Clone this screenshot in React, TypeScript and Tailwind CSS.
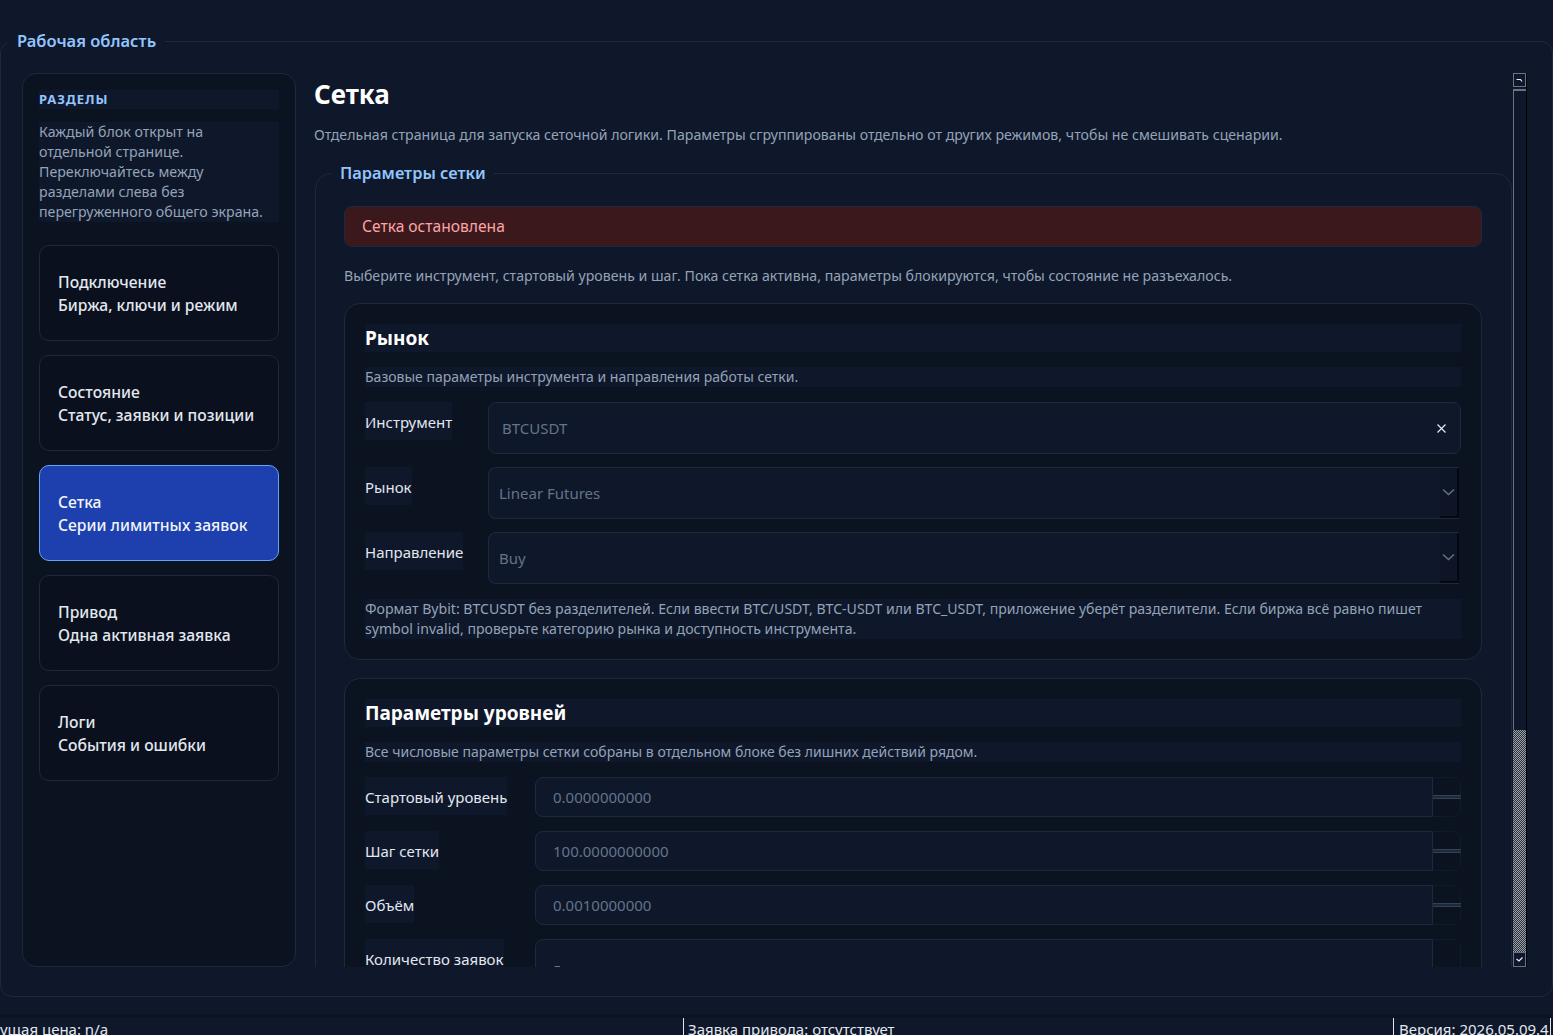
import React from "react";

type NavItem = { title: string; sub: string; active?: boolean };

const navItems: NavItem[] = [
  { title: "Подключение", sub: "Биржа, ключи и режим" },
  { title: "Состояние", sub: "Статус, заявки и позиции" },
  { title: "Сетка", sub: "Серии лимитных заявок", active: true },
  { title: "Привод", sub: "Одна активная заявка" },
  { title: "Логи", sub: "События и ошибки" },
];

const levels = [
  { label: "Стартовый уровень", value: "0.0000000000", tall: false },
  { label: "Шаг сетки", value: "100.0000000000", tall: false },
  { label: "Объём", value: "0.0010000000", tall: false },
  { label: "Количество заявок", value: "5", tall: true },
];

function Sidebar() {
  return (
    <div className="flex h-full w-[274px] shrink-0 flex-col rounded-[14px] border border-[#1e293b] bg-[#0b1220] px-[16px] pt-[16px]">
      <div className="flex h-[19px] items-center bg-[#0f172a] text-[13px] font-bold tracking-[0.9px] text-[#93c5fd]">
        РАЗДЕЛЫ
      </div>
      <div className="mt-[13px] bg-[#0f172a] text-[14.2px] leading-[20px] text-[#94a3b8]">
        <div className="whitespace-nowrap">Каждый блок открыт на</div>
        <div className="whitespace-nowrap">отдельной странице.</div>
        <div className="whitespace-nowrap">Переключайтесь между</div>
        <div className="whitespace-nowrap">разделами слева без</div>
        <div className="whitespace-nowrap">перегруженного общего экрана.</div>
      </div>
      <div className="mt-[23px] flex flex-col gap-[14px]">
        {navItems.map((item) => (
          <div
            key={item.title}
            className={`flex h-[96px] flex-col justify-center rounded-[10px] border px-[18px] pt-[2px] text-[15.7px] font-medium leading-[23px] ${
              item.active
                ? "border-[#60a5fa] bg-[#1e40af] text-[#f1f5f9]"
                : "border-[#1e293b] bg-[#0a101d] text-[#e2e8f0]"
            }`}
          >
            <div>{item.title}</div>
            <div>{item.sub}</div>
          </div>
        ))}
      </div>
    </div>
  );
}

function Label({ text, width }: { text: string; width: string }) {
  return (
    <div className={`${width} shrink-0`}>
      <span className="inline-flex h-[38px] items-center bg-[#0f172a] pt-[2px] text-[15px] text-[#e2e8f0]">
        {text}
      </span>
    </div>
  );
}

function Chevron() {
  return (
    <svg width="13" height="8" viewBox="0 0 13 8">
      <path d="M1 1.5 L6.5 6.5 L12 1.5" stroke="#64748b" strokeWidth="1.4" fill="none" />
    </svg>
  );
}

function ComboField({ value }: { value: string }) {
  return (
    <div className="mr-[2px] flex h-[52px] flex-1 overflow-hidden rounded-l-[8px] border border-r-0 border-[#1e293b] bg-[#0f172a]">
      <div className="flex flex-1 items-center pl-[10px] text-[15px] text-[#64748b]">{value}</div>
      <div className="flex w-[19px] items-center justify-center border-r-2 border-b-2 border-[#05080f] bg-[#0d1526]">
        <Chevron />
      </div>
    </div>
  );
}

function SpinField({ value, tall }: { value: string; tall: boolean }) {
  return (
    <div className={`flex flex-1 ${tall ? "h-[62px]" : "h-[40px]"}`}>
      <div className="flex flex-1 items-center rounded-l-[8px] border border-[#1e293b] bg-[#0f172a] pl-[17px] text-[15px] text-[#64748b]">
        {value}
      </div>
      <div className="flex w-[28px] flex-col">
        <div className="flex-1 rounded-tr-[8px] border-t border-r border-[#111a2c] bg-[#0b1220]" />
        <div className="h-[4px] border-y border-[#334155] bg-[#1e293b]" />
        <div className="flex-1 rounded-br-[8px] border-b border-r border-[#111a2c] bg-[#0b1220]" />
      </div>
    </div>
  );
}

function Scrollbar() {
  return (
    <div className="flex h-full w-[14px] shrink-0 flex-col border-r border-black bg-[#0f172a]">
      <div className="flex h-[14px] items-center justify-center border border-[#6b7280] bg-[#0f172a]">
        <svg width="7" height="5" viewBox="0 0 7 5">
          <path d="M0.5 1.5 H4.5 L6 3.5" stroke="#e0f2fe" strokeWidth="1.2" fill="none" />
        </svg>
      </div>
      <div className="mt-[2px] h-[641px] border-t-2 border-l border-[#6b7280] bg-[#0f172a]" />
      <div className="flex-1 bg-[repeating-conic-gradient(#9ca3af_0_25%,#2b2f36_0_50%)] bg-[length:2px_2px]" />
      <div className="flex h-[15px] items-center justify-center border border-[#6b7280] bg-[#0f172a]">
        <svg width="7" height="5" viewBox="0 0 7 5">
          <path d="M0.5 2 L3 4 L6.5 0.5" stroke="#e0f2fe" strokeWidth="1.2" fill="none" />
        </svg>
      </div>
    </div>
  );
}

function GridPage() {
  return (
    <div className="h-full flex-1 overflow-hidden">
      <h1 className="mt-[5px] text-[26px] font-bold leading-[32px] text-white">Сетка</h1>
      <p className="mt-[15px] whitespace-nowrap text-[14.15px] leading-[20px] text-[#94a3b8]">
        Отдельная страница для запуска сеточной логики. Параметры сгруппированы отдельно от других режимов, чтобы не смешивать сценарии.
      </p>
      <fieldset className="mt-[16px] ml-[1px] mr-[1px] rounded-[16px] border border-[#1e293b] pl-[28px] pr-[29px] pt-[21px] pb-[30px]">
        <legend className="ml-[-12px] px-[8px] text-[16.4px] font-semibold leading-[24px] text-[#93c5fd]">
          Параметры сетки
        </legend>
        <div className="flex h-[41px] items-center rounded-[8px] border border-[#1e293b] bg-[#3b181c] px-[17px] text-[15.6px] text-[#fca5a5]">
          Сетка остановлена
        </div>
        <p className="mt-[19px] whitespace-nowrap text-[14.15px] leading-[20px] text-[#94a3b8]">
          Выберите инструмент, стартовый уровень и шаг. Пока сетка активна, параметры блокируются, чтобы состояние не разъехалось.
        </p>

        <div className="mt-[17px] flex flex-col gap-[15px] rounded-[16px] border border-[#1e293b] bg-[#0b1220] p-[20px]">
          <div className="flex h-[28px] items-center bg-[#0f172a] text-[19px] font-bold text-white">Рынок</div>
          <div className="h-[20px] bg-[#0f172a] text-[14px] leading-[20px] text-[#94a3b8]">
            Базовые параметры инструмента и направления работы сетки.
          </div>
          <div className="flex flex-col gap-[13px]">
            <div className="flex">
              <Label text="Инструмент" width="w-[123px]" />
              <div className="flex h-[52px] flex-1 items-center justify-between rounded-[8px] border border-[#1e293b] bg-[#0f172a] pl-[13px] pr-[14px] text-[15px] text-[#64748b]">
                <span>BTCUSDT</span>
                <svg width="9" height="9" viewBox="0 0 9 9">
                  <path d="M0.5 0.5 L8.5 8.5 M8.5 0.5 L0.5 8.5" stroke="#e2e8f0" strokeWidth="1.2" />
                </svg>
              </div>
            </div>
            <div className="flex">
              <Label text="Рынок" width="w-[123px]" />
              <ComboField value="Linear Futures" />
            </div>
            <div className="flex">
              <Label text="Направление" width="w-[123px]" />
              <ComboField value="Buy" />
            </div>
          </div>
          <div className="bg-[#0f172a] text-[14.1px] leading-[20px] text-[#94a3b8]">
            <div className="whitespace-nowrap">
              Формат Bybit: BTCUSDT без разделителей. Если ввести BTC/USDT, BTC-USDT или BTC_USDT, приложение уберёт разделители. Если биржа всё равно пишет
            </div>
            <div className="whitespace-nowrap">symbol invalid, проверьте категорию рынка и доступность инструмента.</div>
          </div>
        </div>

        <div className="mt-[18px] flex flex-col gap-[15px] rounded-[16px] border border-[#1e293b] bg-[#0b1220] p-[20px]">
          <div className="flex h-[28px] items-center bg-[#0f172a] text-[19px] font-bold text-white">Параметры уровней</div>
          <div className="h-[20px] bg-[#0f172a] text-[14px] leading-[20px] text-[#94a3b8]">
            Все числовые параметры сетки собраны в отдельном блоке без лишних действий рядом.
          </div>
          <div className="flex flex-col gap-[14px]">
            {levels.map((row) => (
              <div key={row.label} className="flex">
                <Label text={row.label} width="w-[170px]" />
                <SpinField value={row.value} tall={row.tall} />
              </div>
            ))}
          </div>
        </div>
      </fieldset>
    </div>
  );
}

export default function App() {
  return (
    <div className="flex h-[1035px] w-[1553px] flex-col overflow-hidden bg-[#0f172a] pt-[29px] font-['Noto_Sans',sans-serif]">
      <fieldset className="shrink-0 rounded-[12px] border border-[#1e293b] pl-[21px] pr-[25px] pt-[20px] pb-[29px]">
        <legend className="ml-[-14px] px-[9px] text-[16.5px] font-semibold leading-[24px] text-[#93c5fd]">
          Рабочая область
        </legend>
        <div className="flex h-[894px] gap-[18px]">
          <Sidebar />
          <div className="flex h-full flex-1">
            <GridPage />
            <Scrollbar />
          </div>
        </div>
      </fieldset>
      <div className="mt-[17px] h-[4px] shrink-0 bg-[#0c1322]" />
      <div className="flex h-[40px] shrink-0 bg-[#0f172a] text-[15px] leading-[20px] text-[#e2e8f0]">
        <div className="w-[683px] overflow-hidden pt-[1px]">
          <div className="ml-[-24px] whitespace-nowrap">Текущая цена: n/a</div>
        </div>
        <div className="w-[710px] whitespace-nowrap border-l border-[#e2e8f0] pl-[4px] pt-[1px]">
          Заявка привода: отсутствует
        </div>
        <div className="w-[158px] whitespace-nowrap border-x border-[#e2e8f0] pl-[5px] pt-[1px]">
          Версия: 2026.05.09.4
        </div>
      </div>
    </div>
  );
}
